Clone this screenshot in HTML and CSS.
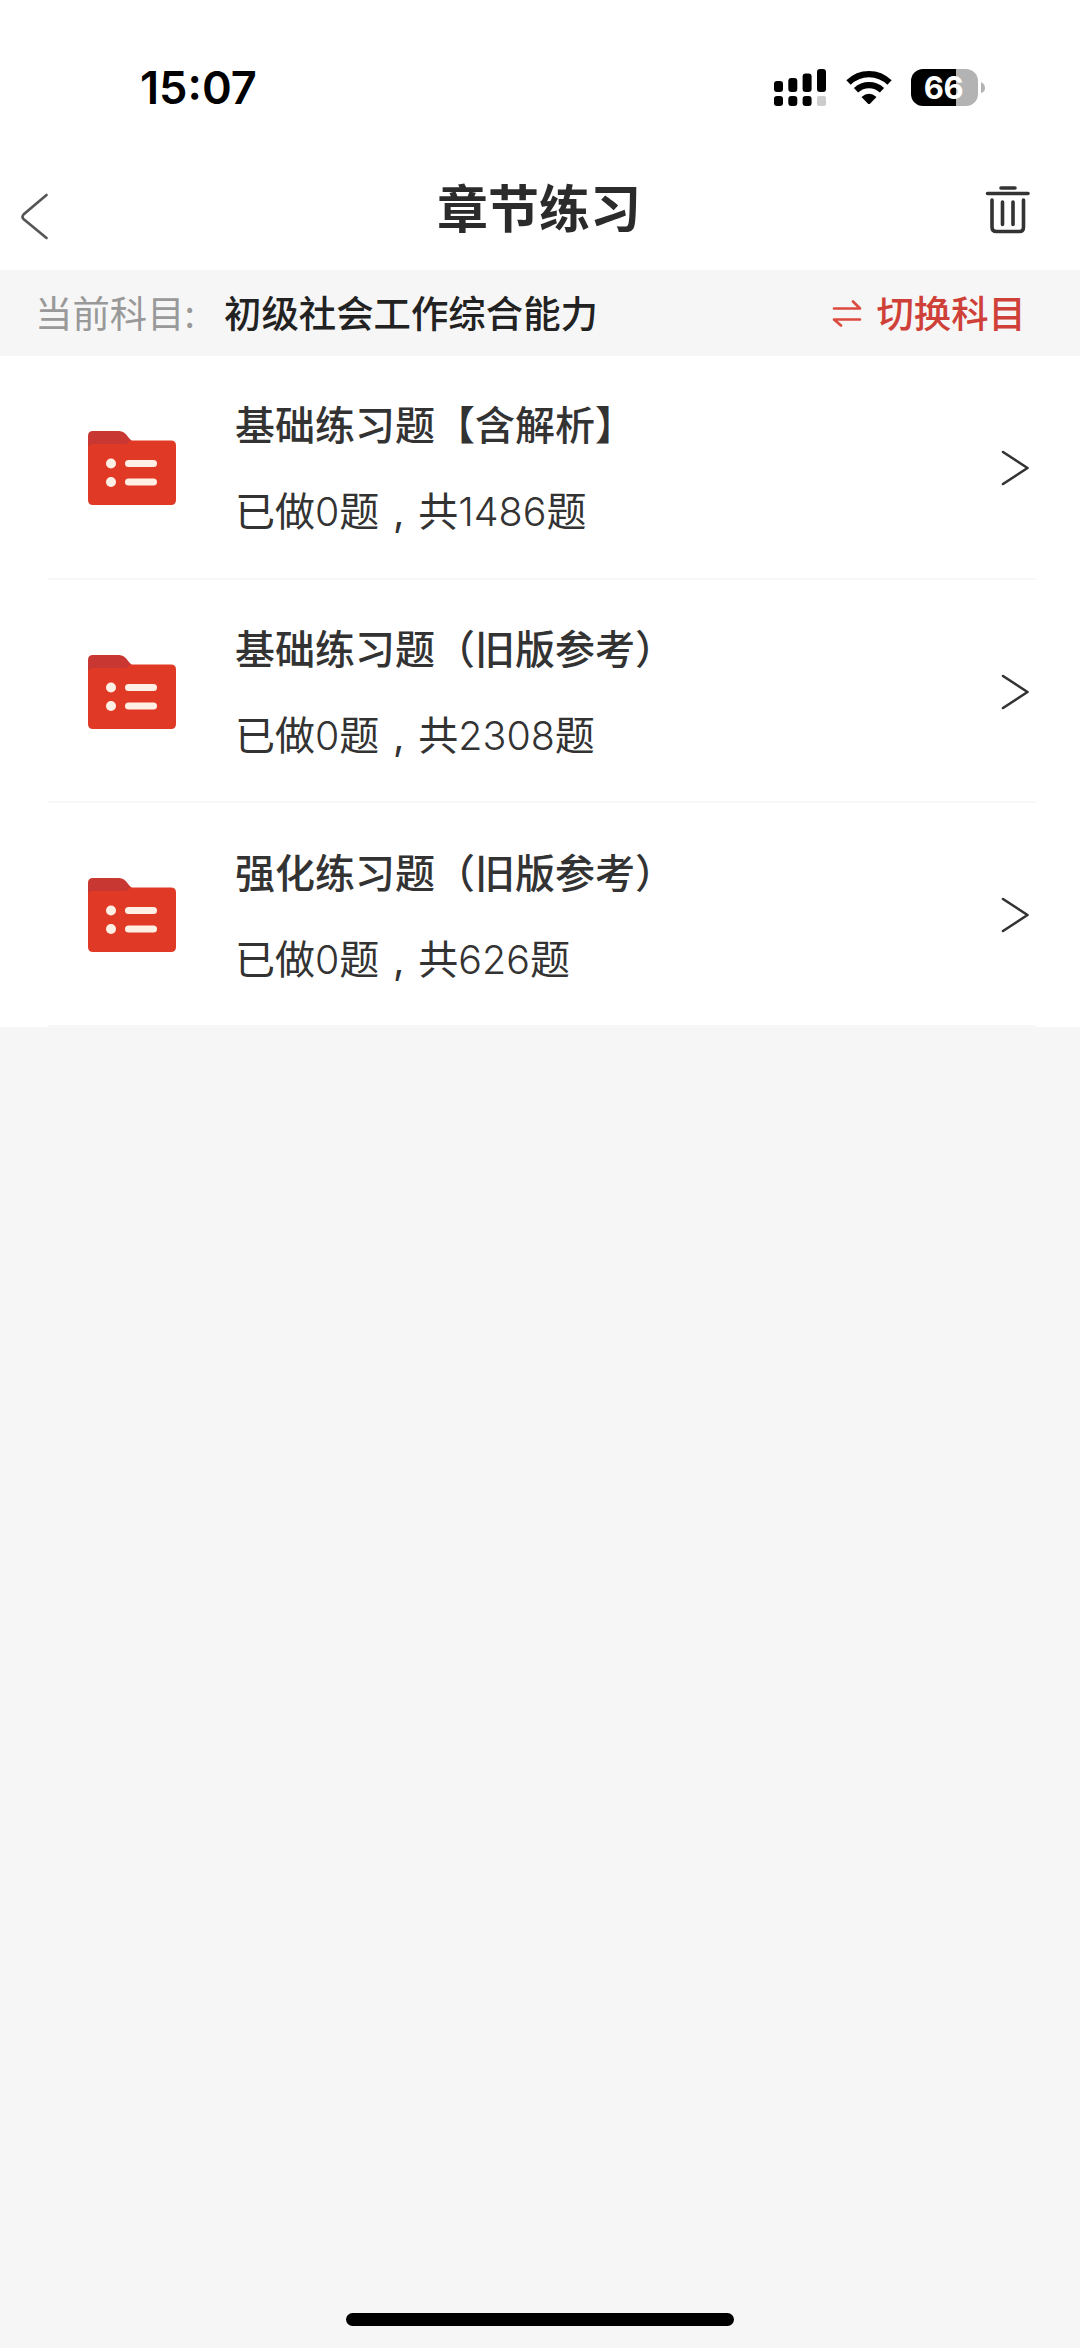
FILE: index.html
```html
<!DOCTYPE html>
<html lang="zh-CN">
<head>
<meta charset="utf-8">
<title>章节练习</title>
<link rel="stylesheet" href="styles.css">
</head>
<body>
<svg class="defs" width="0" height="0" aria-hidden="true">
  <symbol id="folder" viewBox="0 0 88 74">
    <path d="M0 30V5Q0 0 5 0H31C39 0 40 9 47 12V30Z" fill="#c93732"/>
    <path d="M0 18Q0 13 5 13H36Q40 13 42 9.500H83Q88 9.500 88 14.500V69Q88 74 83 74H5Q0 74 0 69Z" fill="#e03a26"/>
    <g fill="#fff0e6"><circle cx="23" cy="32.500" r="5"/><circle cx="23" cy="51" r="5"/><rect x="37" y="29" width="32" height="7" rx="3.500"/><rect x="37" y="47.500" width="32" height="7" rx="3.500"/></g>
  </symbol>
  <symbol id="chevron" viewBox="0 0 28 36">
    <path d="M2 2L26.500 18L2 34" fill="none" stroke="#333" stroke-width="2.600" stroke-linecap="round" stroke-linejoin="round"/>
  </symbol>
</svg>
<div class="screen">
  <div class="status">
    <span class="time">15:07</span>
    <div class="indicators">
      <svg class="signal" width="53" height="38" viewBox="0 0 53 38">
        <rect x="0" y="12" width="9" height="11" rx="3"/><rect x="14.300" y="9" width="9" height="14" rx="3"/><rect x="28.600" y="4.500" width="9" height="18.500" rx="3"/><rect x="43" y="0" width="9" height="23" rx="3"/>
        <rect x="0" y="27" width="9" height="10" rx="3"/><rect x="14.300" y="27" width="9" height="10" rx="3"/><rect x="28.600" y="27" width="9" height="10" rx="3"/><rect x="43" y="27" width="9" height="10" rx="2" fill="#ccc"/>
      </svg>
      <svg class="wifi" width="46" height="35" viewBox="0 0 46 35">
        <g fill="none" stroke="#000" stroke-width="6.200"><path d="M2.500 12.500C14 1.200 32 1.200 43.500 12.500"/><path d="M10 20.300C17.500 13.400 28.500 13.400 36 20.300"/></g>
        <path d="M15.500 27Q23 20.500 30.500 27L24 33.700Q23 34.500 22 33.700Z"/>
      </svg>
      <div class="battery"><span class="level">66</span><svg width="5" height="12" viewBox="0 0 5 12"><path d="M0 0Q4 2 4 6T0 11Z" fill="#b3b3b3"/></svg></div>
    </div>
  </div>
  <header class="nav">
    <svg class="back" width="30" height="50" viewBox="0 0 30 50"><path d="M26.500 3L3.500 22.500Q1.500 25 3.500 27L26.500 46" fill="none" stroke="#555" stroke-width="2.600" stroke-linecap="round"/></svg>
    <h1 class="heading">章节练习</h1>
    <svg class="trash" width="46" height="50" viewBox="0 0 46 50" fill="none" stroke="#333" stroke-width="3.600" stroke-linecap="round" stroke-linejoin="round"><path d="M16 3H30M2.500 8.500H43M7 15V42Q7 46.500 11.500 46.500H34.500Q38.500 46.500 38.500 42V15M17.500 17V39.500M28 17V39.500"/></svg>
  </header>
  <div class="subject">
    <span class="label">当前科目:</span>
    <span class="current">初级社会工作综合能力</span>
    <div class="switch">
      <svg width="30" height="28" viewBox="0 0 30 28" fill="none" stroke="#dc493e" stroke-width="2.600" stroke-linecap="round" stroke-linejoin="round"><path d="M2 9.500H28L21 2.500M28 20.500H2L9 26.500"/></svg>
      <span>切换科目</span>
    </div>
  </div>
  <ul class="list">
    <li class="row">
      <svg class="folder"><use href="#folder"/></svg>
      <div class="info"><div class="name">基础练习题【含解析】</div><div class="count">已做<span class="num">0</span>题<span class="comma">,</span>共<span class="num">1486</span>题</div></div>
      <svg class="chevron"><use href="#chevron"/></svg>
    </li>
    <li class="row">
      <svg class="folder"><use href="#folder"/></svg>
      <div class="info"><div class="name">基础练习题（旧版参考）</div><div class="count">已做<span class="num">0</span>题<span class="comma">,</span>共<span class="num">2308</span>题</div></div>
      <svg class="chevron"><use href="#chevron"/></svg>
    </li>
    <li class="row">
      <svg class="folder"><use href="#folder"/></svg>
      <div class="info"><div class="name">强化练习题（旧版参考）</div><div class="count">已做<span class="num">0</span>题<span class="comma">,</span>共<span class="num">626</span>题</div></div>
      <svg class="chevron"><use href="#chevron"/></svg>
    </li>
  </ul>
  <div class="home"></div>
</div>
</body>
</html>
```
FILE: styles.css
```css
* { box-sizing: border-box; margin: 0; padding: 0; }
body { background: #f6f6f6; font-family: "Noto Sans CJK SC", sans-serif; color: #2b2b2b; }
svg { display: block; flex: none; }
.defs { position: absolute; }
.screen { width: 1080px; height: 2348px; display: flex; flex-direction: column; background: #f6f6f6; overflow: hidden; }
.status { height: 160px; padding: 58px 94px 0 140px; display: flex; justify-content: space-between; align-items: flex-start; background: #fff; color: #000; }
.time { font: 600 45.2px/60px Inter, sans-serif; }
.indicators { display: flex; align-items: flex-start; padding-top: 11px; }
.wifi { margin: 1px 19px 0 19px; }
.battery { display: flex; align-items: center; gap: 3px; }
.level { width: 67px; height: 37px; border-radius: 12px; background: linear-gradient(90deg, #000 45px, #b3b3b3 45px); color: #fff; font: 700 31px/38px Inter, sans-serif; text-align: center; letter-spacing: -0.5px; padding-right: 2px; }
.nav { height: 110px; padding: 0 49px 0 20px; display: flex; justify-content: space-between; align-items: flex-start; background: #fff; }
.back { margin-top: 32px; }
.heading { font-size: 51px; font-weight: 700; line-height: 60px; padding-top: 16px; margin-left: 43px; }
.trash { margin-top: 25px; }
.subject { height: 86px; padding: 0 54px 2px 35px; display: flex; align-items: center; font-size: 37.4px; line-height: 84px; }
.label { color: #999; width: 189px; }
.current { color: #222; font-weight: 500; }
.switch { margin-left: auto; display: flex; align-items: center; gap: 14px; color: #cf4138; font-weight: 500; }
.switch svg { margin-top: 1px; }
.list { list-style: none; background: #fff; height: 671px; display: flex; flex-direction: column; }
.row { flex: 1; display: flex; align-items: center; padding: 0 51px 0 88px; background: linear-gradient(#f7f7f7, #f7f7f7) 48px 100% / 988px 2px no-repeat; }
.folder { width: 88px; height: 74px; }
.info { flex: 1; margin-left: 59px; color: #333; }
.name { font-size: 40px; font-weight: 500; line-height: 60px; margin-bottom: 26px; white-space: nowrap; }
.count { font-size: 40px; font-weight: 400; line-height: 60px; white-space: nowrap; }
.num, .comma { font-family: Inter, sans-serif; }
.num { font-weight: 300; font-size: 39.4px; }
.comma { display: inline-block; width: 39px; text-align: center; }
.chevron { width: 28px; height: 36px; }
.home { width: 388px; height: 13px; margin: auto auto 22px; border-radius: 7px; background: #000; }
```
